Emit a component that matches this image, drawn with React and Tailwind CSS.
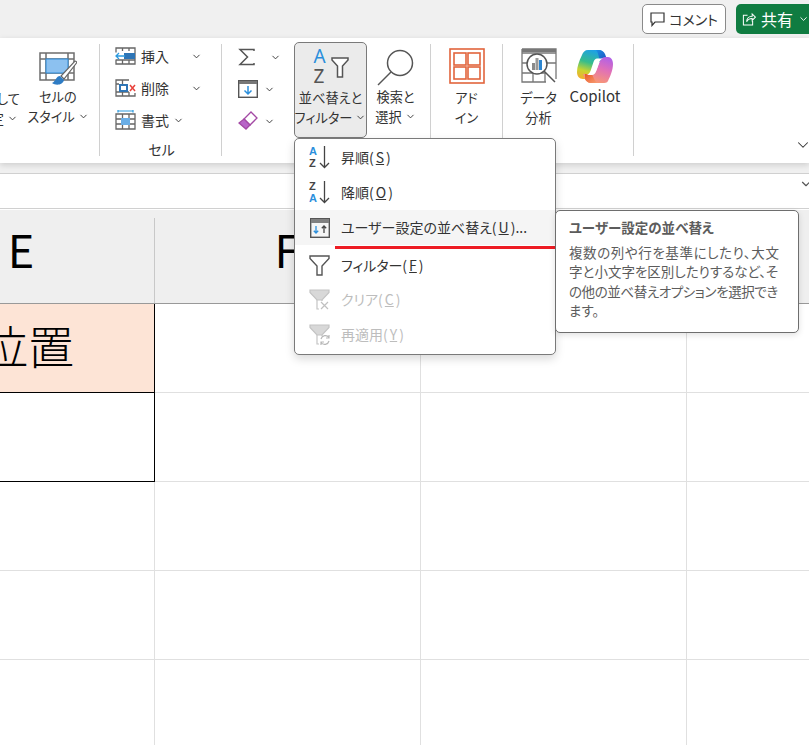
import { ChevronDown } from "lucide-react";

const font = { fontFamily: '"Noto Sans CJK JP", "Noto Sans", sans-serif' };

function Chev({ className = "" }) {
  return <ChevronDown size={11} strokeWidth={2} className={"text-[#333] shrink-0 " + className} />;
}

function Sep() {
  return <div className="w-px h-[112px] bg-[#d0d0d0] mt-[6px] shrink-0" />;
}

function InsertIcon() {
  return (
    <svg width="21" height="18" viewBox="0 0 21 18" fill="none">
      <path d="M1 5.500V1h19v16H1v-4.500M7.500 1v3M14 1v3M7.500 13v4M14 13v4M1 13h19" stroke="#666" strokeWidth="1.300" />
      <rect x="9" y="6" width="11" height="6" fill="#2e75b6" />
      <path d="M1 9h9M4 6L1 9l3 3" stroke="#2b9be0" strokeWidth="1.300" />
    </svg>
  );
}

function DeleteIcon() {
  return (
    <svg width="21" height="18" viewBox="0 0 21 18" fill="none">
      <path d="M14 1H1v16h19v-3M7.500 1v4M14 13v4M7.500 13v4M1 5h3M1 13h13" stroke="#666" strokeWidth="1.300" />
      <rect x="5" y="6" width="7" height="6" fill="#fff" stroke="#2e75b6" strokeWidth="2" />
      <path d="M15 6l5 6M20 6l-5 6" stroke="#e8403a" strokeWidth="1.500" />
    </svg>
  );
}

function FormatIcon() {
  return (
    <svg width="21" height="20" viewBox="0 0 21 20" fill="none">
      <path d="M3 1h15M3 0v2.500M18 0v2.500" stroke="#2b9be0" strokeWidth="1.200" />
      <path d="M1 4h19v15H1zM1 9h19M1 14h19M7.500 4v15M14 4v15" stroke="#666" strokeWidth="1.300" />
      <rect x="6" y="8" width="9" height="7" fill="#6aaee6" />
    </svg>
  );
}

function StyleIcon() {
  return (
    <svg width="38" height="36" viewBox="0 0 38 36" fill="none">
      <path d="M1 1h34v27H1zM1 7h34M1 21h34M7 1v27M29 1v27" stroke="#6e6e6e" strokeWidth="1.500" />
      <rect x="7" y="7" width="22" height="14" fill="#8cc1f0" stroke="#2e8bd8" />
      <path d="M36 9c1 0 2 1 1.500 2L25 27l-3-3z" fill="#fff" stroke="#666" strokeWidth="1.200" />
      <path d="M21 24c-4 0-4 5-8 7 4 3 11 2 12-3z" fill="#2e7cc4" />
    </svg>
  );
}

function SumIcon() {
  return (
    <svg width="18" height="18" viewBox="0 0 18 18" fill="none">
      <path d="M16 3V1.500H2L9.500 9 2 16.500h14V15" stroke="#555" strokeWidth="1.500" />
    </svg>
  );
}

function FillIcon() {
  return (
    <svg width="20" height="18" viewBox="0 0 20 18" fill="none">
      <rect x="0.700" y="0.700" width="18.600" height="16.600" fill="#fff" stroke="#555" strokeWidth="1.400" />
      <rect x="1" y="1" width="18" height="3" fill="#777" />
      <path d="M10 6v8M6.500 10.500L10 14l3.500-3.500" stroke="#2b8fdc" strokeWidth="1.500" />
    </svg>
  );
}

function EraserIcon() {
  return (
    <svg width="20" height="20" viewBox="0 0 20 20" fill="none">
      <path d="M13 1l6 6-7 7-6-6z" fill="#fff" stroke="#a349a4" strokeWidth="1.300" />
      <path d="M6 8l6 6-4 4-7-6z" fill="#b865c8" stroke="#a349a4" strokeWidth="1.300" />
    </svg>
  );
}

function AzFilterIcon() {
  return (
    <div className="relative w-[36px] h-[36px]">
      <span className="absolute left-[1px] top-[-6px] text-[19px] leading-[22px] text-[#2b8fdc]" style={{ fontFamily: '"Noto Sans", sans-serif' }}>A</span>
      <span className="absolute left-[1px] top-[14px] text-[19px] leading-[22px] text-[#555]" style={{ fontFamily: '"Noto Sans", sans-serif' }}>Z</span>
      <svg className="absolute left-[18px] top-[6px]" width="18" height="21" viewBox="0 0 18 21" fill="none">
        <path d="M1 1h16v2l-5.500 6v11h-5V9L1 3z" fill="#fff" stroke="#555" strokeWidth="1.500" />
      </svg>
    </div>
  );
}

function SearchIcon() {
  return (
    <svg width="38" height="38" viewBox="0 0 38 38" fill="none">
      <circle cx="23" cy="15" r="12.500" stroke="#555" strokeWidth="1.500" />
      <path d="M14 24L1 37" stroke="#555" strokeWidth="1.500" />
    </svg>
  );
}

function AddinIcon() {
  return (
    <svg width="36" height="36" viewBox="0 0 36 36" fill="none" stroke="#e2643c" strokeWidth="1.600">
      <rect x="1" y="1" width="34" height="34" />
      <rect x="5" y="5" width="12" height="12" />
      <rect x="19" y="5" width="12" height="12" />
      <rect x="5" y="19" width="12" height="12" />
      <rect x="19" y="19" width="12" height="12" />
    </svg>
  );
}

function DataIcon() {
  return (
    <svg width="36" height="36" viewBox="0 0 36 36" fill="none">
      <path d="M1 1h34v30M1 1v33h24M1 5h34M1 15h34M1 25h24M12 25v9M24 25v9" stroke="#777" strokeWidth="1.300" />
      <rect x="1" y="1" width="34" height="3" fill="#777" />
      <circle cx="16" cy="16" r="10" fill="#fff" stroke="#555" strokeWidth="1.500" />
      <path d="M23 23l11 11" stroke="#555" strokeWidth="1.500" />
      <rect x="11" y="15" width="3" height="7" fill="#8a8a8a" />
      <rect x="14.500" y="10" width="3" height="12" fill="#999" />
      <rect x="18" y="12" width="3" height="10" fill="#2e86d0" />
    </svg>
  );
}

function CopilotIcon() {
  return (
    <svg width="36" height="35" viewBox="0 0 36 35">
      <defs>
        <linearGradient id="cpA" x1="0.600" y1="0" x2="0.300" y2="1">
          <stop offset="0" stopColor="#1c9fea" />
          <stop offset="0.450" stopColor="#36bd8c" />
          <stop offset="0.750" stopColor="#c8d430" />
          <stop offset="1" stopColor="#f0b030" />
        </linearGradient>
        <linearGradient id="cpB" x1="0.800" y1="0" x2="0.400" y2="1">
          <stop offset="0" stopColor="#b060e8" />
          <stop offset="0.450" stopColor="#e070b8" />
          <stop offset="1" stopColor="#fa9a70" />
        </linearGradient>
        <linearGradient id="cpC" x1="0" y1="0" x2="1" y2="1">
          <stop offset="0" stopColor="#1a8fe4" />
          <stop offset="1" stopColor="#2048b8" />
        </linearGradient>
        <linearGradient id="cpD" x1="0" y1="0" x2="1" y2="1">
          <stop offset="0" stopColor="#e85a28" />
          <stop offset="1" stopColor="#f89a70" />
        </linearGradient>
      </defs>
      <path d="M11 1h10c3 0 5 2 6 4l3 8h-7c-3 0-5 2-6 5l-3 8c-1 3-3 4-6 4H6c-4 0-6-3-6-7 0-5 2-11 5-17 1-3 3-5 6-5z" fill="url(#cpA)" />
      <path d="M19 1h3c3 0 5 2 6 4l3 8h-8c-1-5-2-10-4-12z" fill="url(#cpC)" />
      <path d="M25 34H14c-3 0-5-2-6-4l-2-5h8c3 0 5-2 6-5l3-8c1-3 3-4 6-4h2c3 0 5 3 5 7 0 6-3 13-5 17-1 2-3 2-6 2z" fill="url(#cpB)" />
      <path d="M8 25h7c1 3 3 7 5 9h-6c-3 0-5-2-6-4z" fill="url(#cpD)" />
      <path d="M20 9.500h6c-2 .5-3 2-4 4l-3 9c-.8 2-2 3.500-4 3.500H9.500c2-.5 3-2 4-4l3-9c.8-2 2-3.500 3.500-3.500z" fill="#fff" />
    </svg>
  );
}

function SortAsc({ flip }) {
  return (
    <div className="relative w-[21px] h-[24px] shrink-0" style={{ fontFamily: '"Liberation Sans", sans-serif' }}>
      <span className={"absolute left-0 top-[-1px] text-[11px] font-bold leading-[12px] " + (flip ? "text-[#444]" : "text-[#2b8fdc]")}>{flip ? "Z" : "A"}</span>
      <span className={"absolute left-0 top-[11px] text-[11px] font-bold leading-[12px] " + (flip ? "text-[#2b8fdc]" : "text-[#444]")}>{flip ? "A" : "Z"}</span>
      <svg className="absolute left-[10px] top-0" width="11" height="23" viewBox="0 0 11 23" fill="none">
        <path d="M5.500 0v21M1 17l4.500 4.500L10 17" stroke="#444" strokeWidth="1.300" />
      </svg>
    </div>
  );
}

function CustomSortIcon() {
  return (
    <svg width="20" height="20" viewBox="0 0 20 20" fill="none" className="shrink-0">
      <rect x="0.700" y="0.700" width="18.600" height="18.600" stroke="#555" strokeWidth="1.400" />
      <rect x="1" y="1" width="18" height="4" fill="#808080" />
      <path d="M6 8v7M3.800 12.800L6 15l2.200-2.200" stroke="#2b8fdc" strokeWidth="1.300" />
      <path d="M14 15V8M11.800 10.200L14 8l2.200 2.200" stroke="#444" strokeWidth="1.300" />
    </svg>
  );
}

function FunnelIcon({ extra }) {
  if (!extra) {
    return (
      <svg width="21" height="21" viewBox="0 0 21 21" fill="none" className="shrink-0">
        <path d="M1 1h19v2.500L13 11v9H8v-9L1 3.500z" fill="#fff" stroke="#555" strokeWidth="1.400" />
      </svg>
    );
  }
  return (
    <svg width="21" height="21" viewBox="0 0 21 21" fill="none" className="shrink-0">
      <path d="M1 1h19v2.500L13 11H8L1 3.500z" fill="#d8d8d8" stroke="#c4c4c4" strokeWidth="1.200" />
      <path d="M8 11v9h2M13 11v1" stroke="#c4c4c4" strokeWidth="1.200" />
      {extra === "x" && <path d="M12 13l7 7M19 13l-7 7" stroke="#c0c0c0" strokeWidth="1.200" />}
      {extra === "r" && <path d="M12 15a4.500 4.500 0 0 1 8-1.500M20 11v3h-3M20 17a4.500 4.500 0 0 1-8 1.500M12 21v-3h3" stroke="#b8b8b8" strokeWidth="1.200" />}
    </svg>
  );
}

function MenuRow({ icon, children, active, disabled, h }) {
  return (
    <div className={"flex items-center pl-[14px] gap-[11px] text-[14px] " + h + " " + (active ? "bg-[#f5f5f5] " : "") + (disabled ? "text-[#bdbdbd]" : "text-[#333]")}>
      <div className="w-[21px] flex justify-center">{icon}</div>
      <span className="whitespace-nowrap">{children}</span>
    </div>
  );
}

function Key({ children }) {
  return <u className="mx-[2px]">{children}</u>;
}

function SmallRow({ icon, label, chevClass }) {
  return (
    <div className="flex items-center h-[32px] text-[14px] text-[#333]">
      <div className="w-[21px] flex justify-center">{icon}</div>
      <span className="ml-[5px] whitespace-nowrap">{label}</span>
      <Chev className={chevClass} />
    </div>
  );
}

function BigLabel({ children }) {
  return <div className="text-[13.200px] leading-[19.500px] text-[#333] text-center whitespace-nowrap">{children}</div>;
}

function ChevLabel({ children, className = "" }) {
  return (
    <div className={"flex items-center text-[13.200px] leading-[19.500px] text-[#333] whitespace-nowrap " + className}>
      {children}
      <Chev className="ml-[3px]" />
    </div>
  );
}

export default function App() {
  const rows = [0, 1, 2, 3, 4];
  return (
    <div className="relative w-[809px] h-[745px] overflow-hidden bg-white [font-feature-settings:'palt']" style={font}>
      {/* title bar */}
      <div className="h-[38px] bg-[#f0f0f0] flex justify-end items-start pt-[4px] gap-[10px] overflow-hidden">
        <div className="w-[84px] h-[30px] bg-white border border-[#8a8a8a] rounded-[5px] flex items-center justify-center gap-[4px] text-[14px] text-[#333] shrink-0">
          <svg width="15" height="15" viewBox="0 0 15 15" fill="none">
            <path d="M1 1h13v9H5l-3 3.500V10H1z" stroke="#333" strokeWidth="1.200" />
          </svg>
          コメント
        </div>
        <div className="w-[73px] h-[30px] bg-[#107c41] rounded-l-[5px] flex items-center pl-[6px] gap-[5px] text-[16px] text-white shrink-0 whitespace-nowrap">
          <svg width="15" height="15" viewBox="0 0 15 15" fill="none">
            <path d="M6 3H1.500v10.500h10V9M5 10c0-4 3-6 6-6V1.500L14.500 5 11 8.500V6.500c-3 0-5 1-6 3.500z" stroke="#fff" strokeWidth="1.100" />
          </svg>
          共有
          <ChevronDown size={12} />
        </div>
      </div>

      {/* ribbon */}
      <div className="relative z-10 h-[125px] bg-white flex shadow-[0_2px_6px_rgba(0,0,0,0.15)]">
        <div className="w-[99px] overflow-hidden flex flex-col shrink-0">
          <div className="flex justify-end flex-1 pr-[15px]">
            <div className="w-[27px] shrink-0 flex flex-col items-end pt-[51px] pr-[12px]">
              <BigLabel>として</BigLabel>
              <ChevLabel className="mr-[2px]">書式設定</ChevLabel>
            </div>
            <div className="flex flex-col items-center pt-[14px] w-[52px]">
              <StyleIcon />
              <div className="mt-[-1px]">
                <BigLabel>セルの</BigLabel>
                <ChevLabel className="-mx-[4px]">スタイル</ChevLabel>
              </div>
            </div>
          </div>
          <div className="h-[28px] -ml-[53px] text-[14px] text-[#333] whitespace-nowrap">スタイル</div>
        </div>
        <Sep />
        <div className="w-[121px] flex flex-col items-start pl-[15px] pt-[2px] shrink-0">
          <SmallRow icon={<InsertIcon />} label="挿入" chevClass="ml-[22px]" />
          <SmallRow icon={<DeleteIcon />} label="削除" chevClass="ml-[22px]" />
          <SmallRow icon={<FormatIcon />} label="書式" chevClass="ml-[4px]" />
          <div className="w-[91px] text-center text-[14px] text-[#333] mt-[3px] pl-[2px]">セル</div>
        </div>
        <Sep />
        <div className="w-[72px] flex flex-col items-start pl-[16px] pt-[3px] shrink-0">
          <div className="flex items-center h-[32px]"><SumIcon /><Chev className="ml-[14px]" /></div>
          <div className="flex items-center h-[32px]"><FillIcon /><Chev className="ml-[6px]" /></div>
          <div className="flex items-center h-[32px]"><EraserIcon /><Chev className="ml-[6px]" /></div>
        </div>
        <div className="w-[73px] h-[96px] mt-[4px] bg-[#ebebeb] border border-[#7a7a7a] rounded-[5px] flex flex-col items-center pt-[8px] shrink-0">
          <AzFilterIcon />
          <div className="mt-[1px]"><BigLabel>並べ替えと</BigLabel></div>
          <ChevLabel>フィルター</ChevLabel>
        </div>
        <div className="w-[63px] flex flex-col items-center pt-[10px] pr-[6px] shrink-0">
          <SearchIcon />
          <div className="mt-[1px]"><BigLabel>検索と</BigLabel></div>
          <ChevLabel>選択</ChevLabel>
        </div>
        <Sep />
        <div className="w-[71px] flex flex-col items-center pt-[10px] shrink-0">
          <AddinIcon />
          <div className="mt-[4px]"><BigLabel>アド</BigLabel><BigLabel>イン</BigLabel></div>
        </div>
        <Sep />
        <div className="w-[71px] flex flex-col items-center pt-[10px] shrink-0">
          <DataIcon />
          <div className="mt-[4px]"><BigLabel>データ</BigLabel><BigLabel>分析</BigLabel></div>
        </div>
        <div className="w-[58px] flex flex-col items-center pt-[11px] -ml-[8px] mr-[9px] shrink-0">
          <CopilotIcon />
          <div className="mt-[2px] text-[15px] leading-[20px] text-[#333]">Copilot</div>
        </div>
        <Sep />
        <div className="flex-1 flex justify-end items-end pb-[9px]">
          <ChevronDown size={18} strokeWidth={1.400} className="text-[#333] -mr-[3px]" />
        </div>
      </div>

      {/* formula bar */}
      <div className="h-[10px] bg-[#f0f0f0]" />
      <div className="h-[36px] bg-white border-t border-b border-[#d0d0d0] flex justify-end items-center">
        <ChevronDown size={14} className="text-[#555] -mr-[4px] -mt-[14px]" />
      </div>

      {/* sheet */}
      <div className="mt-px ml-[-111px] grid grid-cols-[266px_266px_266px_266px] grid-rows-[94px_89px_89px_89px_89px_89px]">
        {["E", "F", "G", ""].map((c) => (
          <div key={c} className="bg-[#efefef] border-b border-[#999] pt-[8px] pr-[2px] relative flex justify-center">
            <div className="absolute right-0 top-[8px] bottom-0 w-px bg-[#c8c8c8]" />
            <span className="text-[45px] leading-[62px] text-black">{c}</span>
          </div>
        ))}
        {rows.map((r) => (
          <div key={r} className="contents">
            {r === 0 ? (
              <div className="bg-[#fde4d6] border-r border-b border-black flex items-center justify-end pr-[80px] pb-[8px] overflow-hidden whitespace-nowrap">
                <span className="text-[46px] leading-none text-black font-light">位置</span>
              </div>
            ) : r === 1 ? (
              <div className="border-r border-b border-black" />
            ) : (
              <div className="border-r border-b border-[#e0e0e0]" />
            )}
            <div className="border-r border-b border-[#e0e0e0]" />
            <div className="border-r border-b border-[#e0e0e0]" />
            <div className="border-r border-b border-[#e0e0e0]" />
          </div>
        ))}
      </div>

      {/* sort menu */}
      <div className="absolute z-20 left-[294px] top-[138px] w-[262px] h-[217px] bg-white border border-[#7a7a7a] rounded-[5px] shadow-[0_4px_10px_rgba(0,0,0,0.15)] pt-[1px] overflow-hidden">
        <MenuRow h="h-[35px]" icon={<SortAsc />}>昇順(<Key>S</Key>)</MenuRow>
        <MenuRow h="h-[35px]" icon={<SortAsc flip />}>降順(<Key>O</Key>)</MenuRow>
        <MenuRow h="h-[35px]" active icon={<CustomSortIcon />}>ユーザー設定の並べ替え(<Key>U</Key>)...</MenuRow>
        <MenuRow h="h-[37px] pt-[3px]" icon={<FunnelIcon />}>フィルター(<Key>F</Key>)</MenuRow>
        <MenuRow h="h-[35px]" disabled icon={<FunnelIcon extra="x" />}>クリア(<Key>C</Key>)</MenuRow>
        <MenuRow h="h-[35px]" disabled icon={<FunnelIcon extra="r" />}>再適用(<Key>Y</Key>)</MenuRow>
        <div className="absolute left-[40px] right-0 top-[107px] h-[3px] bg-[#ed1c24]" />
      </div>

      {/* tooltip */}
      <div className="absolute z-30 left-[555px] top-[210px] w-[244px] h-[123px] bg-white border border-[#6e6e6e] rounded-[5px] shadow-[0_2px_6px_rgba(0,0,0,0.12)] px-[13px] pt-[6px] text-[#5c5c5c]">
        <div className="text-[13.500px] font-bold leading-[20px] whitespace-nowrap">ユーザー設定の並べ替え</div>
        <div className="text-[13.500px] leading-[19.300px] mt-[6px] whitespace-nowrap">
          <div className="tracking-[0.6px]">複数の列や行を基準にしたり、大文</div>
          <div>字と小文字を区別したりするなど、そ</div>
          <div className="tracking-[-0.4px]">の他の並べ替えオプションを選択でき</div>
          <div>ます。</div>
        </div>
      </div>
    </div>
  );
}
